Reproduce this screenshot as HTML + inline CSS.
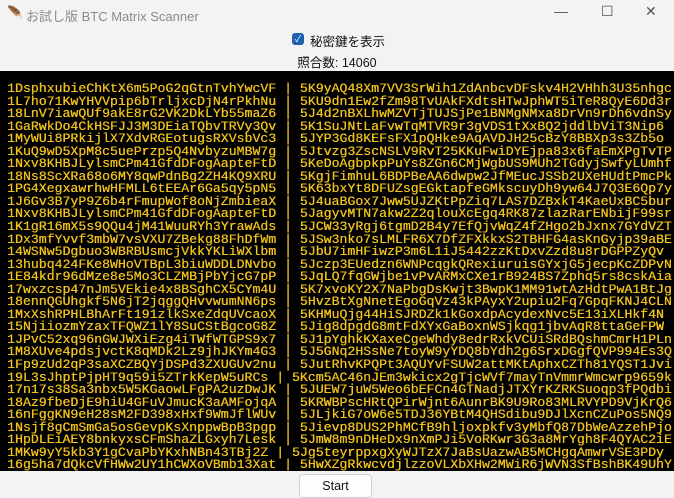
<!DOCTYPE html>
<html><head><meta charset="utf-8"><style>
body{margin:0;width:674px;height:497px;background:#f3f3f3;overflow:hidden;font-family:"Liberation Sans","Noto Sans CJK JP",sans-serif;position:relative}
.title{position:absolute;left:26px;top:6px;font-size:13px;color:#8a8a8a}
.ico{position:absolute;left:7px;top:5px;font-size:13px}
.ctl{position:absolute;top:3px;font-size:14px;color:#555}
.chk{position:absolute;left:292px;top:33px;width:12px;height:12px;background:#1f5fb0;border-radius:3px;color:#fff;font-size:9px;text-align:center;line-height:12px}
.lbl{position:absolute;left:310px;top:31px;font-size:12.5px;color:#111}
.cnt{position:absolute;left:0;width:674px;text-align:center;top:52px;font-size:12.5px;color:#111}
.term{position:absolute;left:0;top:71px;width:674px;height:400px;background:#000;overflow:hidden}
pre{margin:0;position:absolute;left:7px;top:12px;font-family:"Liberation Mono","Courier New",monospace;font-size:13.2px;line-height:12.55px;color:#f0c21a;white-space:pre;text-shadow:0.3px 0 0 #f0c21a}
.btn{position:absolute;left:299px;top:474px;width:73px;height:24px;background:#fdfdfd;border:1px solid #d0d0d0;border-radius:4px;box-sizing:border-box;text-align:center;font-size:12.5px;line-height:22px;color:#111}
</style></head><body>
<div class="ico">🪶</div>
<div class="title">お試し版 BTC Matrix Scanner</div>
<div class="ctl" style="left:554px">—</div>
<div class="ctl" style="left:601px">☐</div>
<div class="ctl" style="left:645px">✕</div>
<div class="chk">✓</div>
<div class="lbl">秘密鍵を表示</div>
<div class="cnt">照合数: 14060</div>
<div class="term"><pre>1DsphxubieChKtX6m5PoG2qGtnTvhYwcVF | 5K9yAQ48Xm7VV3SrWih1ZdAnbcvDFskv4H2VHhh3U35nhgc
1L7ho71KwYHVVpip6bTrljxcDjN4rPkhNu | 5KU9dn1Ew2fZm98TvUAkFXdtsHTwJphWT5iTeR8QyE6Dd3r
18LnV7iawQUf9akE8rG2VK2DkLYb55maZ6 | 5J4d2nBXLhwMZVTjTUJSjPe1BNMgNMxa8DrVn9rDh6vdnSy
1GaRwkDo4CkHSFJJ3M3DEiaTQbvTRVy3Qv | 5K1SuJNtLaFvwTqMTVR9r3gVDS1tXxBQ2jddlbViT3Nip6
1MyWUi8PRkijlX7XdvRGEotugsRXVsbVc3 | 5JYP3Gd8KEFsFX1pQHke9AqAVDJH25cBzY8BBXp3s3Zb5o
1KuQ9wD5XpM8c5uePrzp5Q4NvbyzuMBW7g | 5Jtvzg3ZscNSLV9RvT25KKuFwiDYEjpa83x6faEmXPgTvTP
1Nxv8KHBJLylsmCPm41GfdDFogAapteFtD | 5KeDoAgbpkpPuYs8ZGn6CMjWgbUS9MUh2TGdyjSwfyLUmhf
18Ns8ScXRa68o6MY8qwPdnBg2ZH4KQ9XRU | 5KgjFimhuL6BDPBeAA6dwpw2JfMEucJSSb2UXeHUdtPmcPk
1PG4XegxawrhwHFMLL6tEEAr6Ga5qy5pN5 | 5K63bxYt8DFUZsgEGktapfeGMkscuyDh9yw64J7Q3E6Qp7y
1J6Gv3B7yP9Z6b4rFmupWof8oNjZmbieaX | 5J4uaBGox7Jww5UJZKtPpZiq7LAS7DZBxkT4KaeUxBC5bur
1Nxv8KHBJLylsmCPm41GfdDFogAapteFtD | 5JagyvMTN7akw2Z2qlouXcEgq4RK87zlazRarENbijF99sr
1K1gR16mX5s9QQu4jM41WuuRYh3YrawAds | 5JCW33yRgj6tgmD2B4y7EfQjvWqZ4fZHgo2bJxnx7GYdVZT
1Dx3mfYvvf3mbW7vsVXU7ZBekg88FhDfWm | 5JSw3nko7sLMLFR6X7DfZFXkkxS2TBHFG4asKnGyjp39aBE
14WSNw5Dgbuo3WBRBUsmcjVkkYKLiWXlbm | 5JbU7imHFiwzP3m6L1iJ5442zzKtDxvZzd8u8rDGPPZyQv
13hubq424FKe8WHoVTBpL3biuWDDLDNvbo | 5Jczp3EUedzn6WNPcqgkQRexiuruisGYxjG5jecpKcZDPvN
1E84kdr96dMze8e5Mo3CLZMBjPbYjcG7pP | 5JqLQ7fqGWjbe1vPvARMxCXe1rB924BS7Zphq5rs8cskAia
17wxzcsp47nJm5VEkie4x8BSghCX5CYm4U | 5K7xvoKY2X7NaPbgDsKwjt3BwpK1MM91wtAzHdtPwA1BtJg
18ennQGUhgkf5N6jT2jqggQHvvwumNN6ps | 5HvzBtXgNnetEgoGqVz43kPAyxY2upiu2Fq7GpqFKNJ4CLN
1MxXshRPHLBhArFt191zlkSxeZdqUVcaoX | 5KHMuQjg44HiSJRDZk1kGoxdpAcydexNvc5E13iXLHkf4N
15NjiiozmYzaxTFQWZ1lY8SuCStBgcoG8Z | 5Jig8dpgdG8mtFdXYxGaBoxnWSjkqg1jbvAqR8ttaGeFPW
1JPvC52xq96nGWJWXiEzg4iTWfWTGPS9x7 | 5J1pYghkKXaxeCgeWhdy8edrRxkVCUiSRdBQshmCmrH1PLn
1M8XUve4pdsjvctK8qMDk2Lz9jhJKYm4G3 | 5J5GNq2HSsNe7toyW9yYDQ8bYdh2g6SrxDGgfQVP994Es3Q
1Fp9zUd2qP3saXCZBQYjDSPd3ZXUGUv2nu | 5JutRhvKPQPt3AQUYvFSUW2attMKtAphxCZTh81YQST1Jvi
19L3sJhptPjpHT9q59i5ZTrkKepW5uRCs | 5Kcm5AC46nJEm3wkicx2gTjcWVf7mayTnVmmrWmcwrp9659k
17n17s38Sa3nbx5W5KGaowLFgPA2uzDwJK | 5JUEW7juW5Weo6bEFCn4GTNadjJTXYrKZRKSuoqp3fPQdbi
18Az9fbeDjE9hiU4GFuVJmucK3aAMFojqA | 5KRWBPscHRtQPirWjnt6AunrBK9U9Ro83MLRVYPD9VjKrQ6
16nFggKN9eH28sM2FD398xHxf9WmJflWUv | 5JLjkiG7oW6e5TDJ36YBtM4QHSdibu9DJlXcnCZuPos5NQ9
1Nsjf8gCmSmGa5osGevpKsXnppwBpB3pgp | 5Jievp8DUS2PhMCfB9hljoxpkfv3yMbfQ87DbWeAzzehPjo
1HpDLEiAEY8bnkyxsCFmShaZLGxyh7Lesk | 5JmW8m9nDHeDx9nXmPJi5VoRKwr3G3a8MrYgh8F4QYAC2iE
1MKw9yY5kb3Y1gCvaPbYKxhNBn43TBj2Z | 5Jg5teyrppxgXyWJTzX7JaBsUazwAB5MCHgqAmwrVSE3PDy
16g5ha7dQkcVfHWw2UY1hCWXoVBmb13Xat | 5HwXZgRkwcvdjlzzoVLXbXHw2MWiR6jWVN3SfBshBK49UhY</pre></div>
<div class="btn">Start</div>
</body></html>
